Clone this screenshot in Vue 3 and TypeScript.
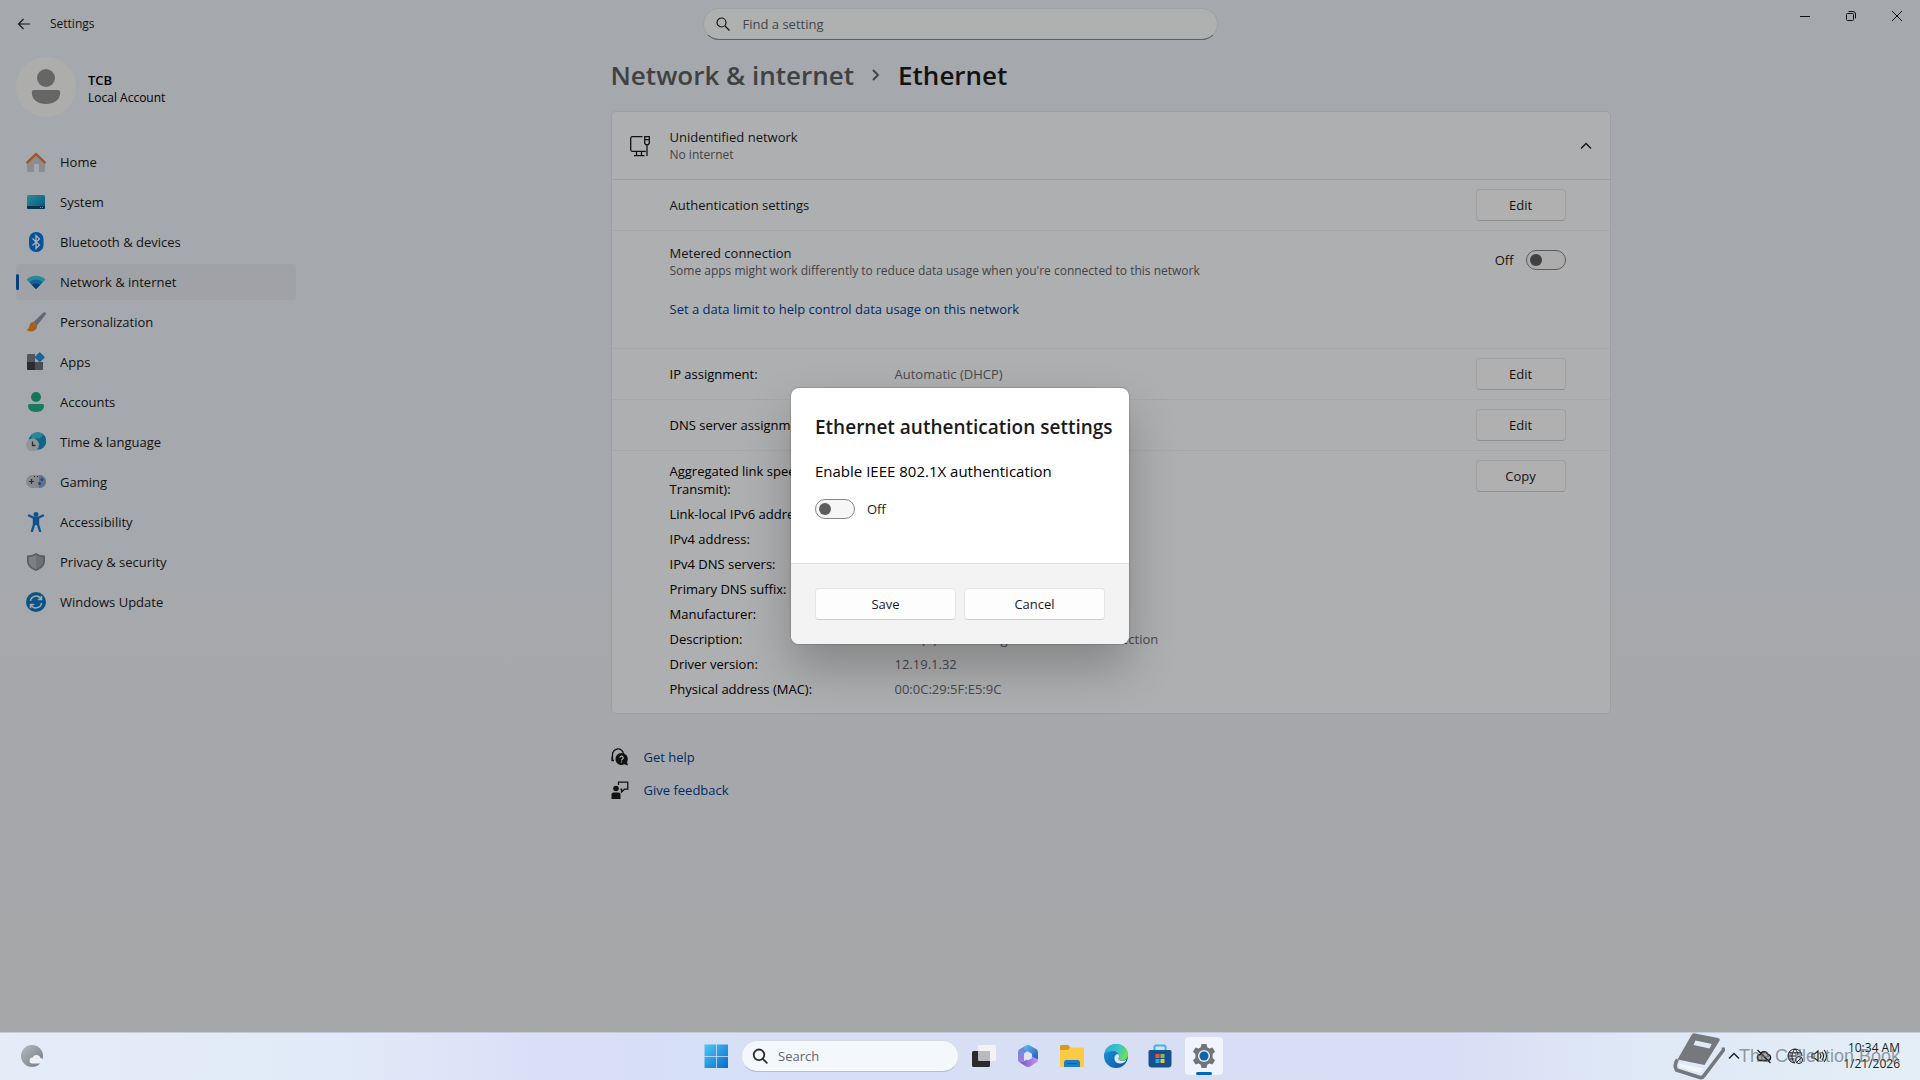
<script setup lang="ts">
import { ref } from 'vue'

interface NavItem {
  id: string
  label: string
}

interface Detail {
  label: string
  value: string
}

const navItems: NavItem[] = [
  { id: 'home', label: 'Home' },
  { id: 'system', label: 'System' },
  { id: 'bluetooth', label: 'Bluetooth & devices' },
  { id: 'network', label: 'Network & internet' },
  { id: 'personalization', label: 'Personalization' },
  { id: 'apps', label: 'Apps' },
  { id: 'accounts', label: 'Accounts' },
  { id: 'time', label: 'Time & language' },
  { id: 'gaming', label: 'Gaming' },
  { id: 'accessibility', label: 'Accessibility' },
  { id: 'privacy', label: 'Privacy & security' },
  { id: 'update', label: 'Windows Update' },
]

const details: Detail[] = [
  { label: 'Aggregated link speed (Receive/ Transmit):', value: '' },
  { label: 'Link-local IPv6 address:', value: '' },
  { label: 'IPv4 address:', value: '' },
  { label: 'IPv4 DNS servers:', value: '' },
  { label: 'Primary DNS suffix:', value: '' },
  { label: 'Manufacturer:', value: '' },
  { label: 'Description:', value: 'Intel(R) 82574L Gigabit Network Connection' },
  { label: 'Driver version:', value: '12.19.1.32' },
  { label: 'Physical address (MAC):', value: '00:0C:29:5F:E5:9C' },
]

const activeNav = ref('network')
const query = ref('')
const taskQuery = ref('')
const metered = ref(false)
const dot1x = ref(false)
</script>

<template>
  <div class="desktop">
    <div class="window">
      <header class="titlebar">
        <div class="titlebar-start">
          <button class="back" type="button" aria-label="Back">
            <svg width="14" height="12" viewBox="0 0 14 12" fill="none" stroke="currentColor" stroke-width="1.1">
              <path d="M13 6H1.5M6.5 1 1.5 6l5 5" />
            </svg>
          </button>
          <span class="app-name">Settings</span>
        </div>
        <div class="find">
          <svg width="14" height="14" viewBox="0 0 14 14" fill="none" stroke="currentColor" stroke-width="1.2">
            <circle cx="5.5" cy="5.5" r="4.5" />
            <path d="m9 9 4.5 4.5" />
          </svg>
          <input v-model="query" type="text" placeholder="Find a setting" aria-label="Find a setting" />
        </div>
        <div class="controls">
          <button type="button" aria-label="Minimize">
            <svg width="12" height="12" viewBox="0 0 12 12" fill="none" stroke="currentColor"><path d="M1 6.5h10" /></svg>
          </button>
          <button type="button" aria-label="Restore">
            <svg width="12" height="12" viewBox="0 0 12 12" fill="none" stroke="currentColor">
              <rect x="1.5" y="3.5" width="7" height="7" rx="1" />
              <path d="M3.5 1.5H8A2.5 2.5 0 0 1 10.5 4v4.5" />
            </svg>
          </button>
          <button type="button" aria-label="Close">
            <svg width="12" height="12" viewBox="0 0 12 12" fill="none" stroke="currentColor"><path d="m1 1 10 10M11 1 1 11" /></svg>
          </button>
        </div>
      </header>

      <div class="body">
        <aside class="sidebar">
          <div class="account">
            <svg class="avatar" viewBox="0 0 60 60">
              <circle cx="30" cy="30" r="30" fill="#f8f8f6" />
              <circle cx="30" cy="21" r="9" fill="#939393" />
              <path d="M18 33h24q2.2 0 2.2 2.2C44.2 43 38 47 30 47s-14.2-4-14.2-11.8Q15.8 33 18 33z" fill="#939393" />
            </svg>
            <div class="account-text">
              <strong>TCB</strong>
              <span>Local Account</span>
            </div>
          </div>

          <nav class="nav">
            <a
              v-for="item in navItems"
              :key="item.id"
              href="#"
              :class="{ active: item.id === activeNav }"
              @click.prevent="activeNav = item.id"
            >
              <svg class="nav-icon" viewBox="0 0 20 20">
                <template v-if="item.id === 'home'">
                  <path d="M1 9 10 2l9 7v10a1 1 0 0 1-1 1h-5v-8H8v8H2a1 1 0 0 1-1-1z" fill="#c9cbce" />
                  <path d="M1.2 10.5 10 2l8.800 8.500" fill="none" stroke="#e8782a" stroke-width="2.400" stroke-linecap="round" stroke-linejoin="round" />
                </template>
                <template v-else-if="item.id === 'system'">
                  <defs>
                    <linearGradient id="sys" x1="0" y1="0" x2="1" y2="1"><stop offset="0" stop-color="#38cdd6" /><stop offset="1" stop-color="#0b77b5" /></linearGradient>
                  </defs>
                  <rect x="1" y="3" width="18" height="14" rx="1.5" fill="url(#sys)" />
                  <path d="M1 14h18v1.5a1.5 1.5 0 0 1-1.5 1.5h-15A1.5 1.5 0 0 1 1 15.5z" fill="#0c4a6e" />
                  <path d="M14 15h1v1h-1zM16 15h1v1h-1z" fill="#8fe0f5" />
                </template>
                <template v-else-if="item.id === 'bluetooth'">
                  <rect x="3" y="0" width="14.5" height="20" rx="7" fill="#0a78e0" />
                  <path d="m6.5 6.5 7 6.5-3.5 3.5v-13L13.5 7l-7 6.5" fill="none" stroke="#fff" stroke-width="1.3" />
                </template>
                <template v-else-if="item.id === 'network'">
                  <path d="M.5 7.5a14 14 0 0 1 19 0L10 17z" fill="#33c7e2" />
                  <path d="M3.3 10.2a10 10 0 0 1 13.4 0L10 17z" fill="#1590d6" />
                  <path d="M6 13a6 6 0 0 1 8 0l-4 4z" fill="#0b52a8" />
                </template>
                <template v-else-if="item.id === 'personalization'">
                  <path d="M19.5.5c.7.7.4 1.6-.2 2.5L11 13.5 7.5 10 17 1c.9-.8 1.8-1.1 2.5-.5z" fill="#8d959e" />
                  <path d="m7.5 10 3.500 3.500c.4 3-2 5.800-5.500 5.900-2 .1-4-.4-5-1.400C2.500 17.500 3 15.500 3.600 13c.6-2 2-3 3.900-3z" fill="#ee8a28" />
                </template>
                <template v-else-if="item.id === 'apps'">
                  <path d="M1 3a1 1 0 0 1 1-1h7v8H1z" fill="#777b82" />
                  <path d="M1 10h8v8H2a1 1 0 0 1-1-1z" fill="#3d4046" />
                  <path d="M9 10h8v7a1 1 0 0 1-1 1H9z" fill="#696d74" />
                  <rect x="10" y="1.5" width="7.5" height="7.5" rx="1" transform="rotate(45 13.75 5.25)" fill="#1f93db" />
                </template>
                <template v-else-if="item.id === 'accounts'">
                  <circle cx="10" cy="5" r="5" fill="#22a97f" />
                  <path d="M3.5 12h13q1.5 0 1.5 1.5C18 18 14.5 20 10 20s-8-2-8-6.500Q2 12 3.500 12z" fill="#23b086" />
                </template>
                <template v-else-if="item.id === 'time'">
                  <circle cx="11.5" cy="9" r="8.8" fill="#1590c8" />
                  <path d="M5 3.500C8-.5 14-.5 17 2l-2 4-5 .5L7 8z" fill="#3cc4cf" />
                  <circle cx="6.5" cy="13" r="6.5" fill="#d4d6d8" />
                  <path d="M6.5 9.5v4h3" fill="none" stroke="#3b3b3b" stroke-width="1.3" />
                </template>
                <template v-else-if="item.id === 'gaming'">
                  <rect x="0" y="3" width="20" height="13" rx="6.5" fill="#c0c4cb" />
                  <path d="M13 3h.5a6.500 6.500 0 0 1 0 13H13z" fill="#8fa3be" />
                  <path d="M5.500 7v5M3 9.500h5M8 4.500h1M11 4.500h1" stroke="#3f454d" stroke-width="1.2" />
                  <circle cx="16" cy="7.5" r="1.5" fill="#2c6cb5" />
                  <circle cx="13.5" cy="11.5" r="1.5" fill="#2c6cb5" />
                </template>
                <template v-else-if="item.id === 'accessibility'">
                  <circle cx="10" cy="2.500" r="2.500" fill="#1478cc" />
                  <path d="M3 3.500 8 6h4l5-2.500M10 6v6M8 6.500v6L6 19M12 6.500v6l2 6.500" fill="none" stroke="#1478cc" stroke-width="2.400" stroke-linecap="round" stroke-linejoin="round" />
                </template>
                <template v-else-if="item.id === 'privacy'">
                  <path d="M10 1c2.500 1.700 5.500 2.500 9 2.500V9c0 5-4 8-9 10-5-2-9-5-9-10V3.500C4.500 3.500 7.500 2.700 10 1z" fill="#83878c" />
                  <path d="M10 3c2 1.300 4.500 2 7.300 2.100V9c0 4-3.300 6.500-7.300 8.200z" fill="#9da1a6" />
                  <path d="M10 3C8 4.300 5.500 5 2.700 5.100V9c0 4 3.300 6.500 7.300 8.200z" fill="#b4b7bb" />
                </template>
                <template v-else>
                  <circle cx="10" cy="10" r="10" fill="#0e78bf" />
                  <path d="M4.500 9A5.600 5.600 0 0 1 15 7M15.500 11A5.600 5.600 0 0 1 5 13M15.500 3.800v3.700h-3.700M4.500 16.200v-3.700h3.700" fill="none" stroke="#e8f3fb" stroke-width="1.5" />
                </template>
              </svg>
              <span>{{ item.label }}</span>
            </a>
          </nav>
        </aside>

        <main class="content">
          <h1 class="crumbs">
            <a href="#" class="crumb-link">Network &amp; internet</a>
            <svg width="10" height="14" viewBox="0 0 10 14" fill="none" stroke="#5b5e63" stroke-width="1.8"><path d="m2 2 5 5-5 5" /></svg>
            <span>Ethernet</span>
          </h1>

          <section class="card">
            <div class="card-head">
              <svg class="eth-icon" width="22" height="22" viewBox="0 0 22 22" fill="none" stroke="#1b1b1b" stroke-width="1.3">
                <path d="M13.500 1.700H3.200A1.500 1.500 0 0 0 1.700 3.200v11.600a1.500 1.500 0 0 0 1.500 1.500h13.600M7.500 16.500v4M12.500 16.500v4M5 20.600h10.500" />
                <path d="M15.700 1.700h4.600v6.500l-1 1.500h-2.600l-1-1.500zM15.700 4.700h4.600M18 9.700V21" />
              </svg>
              <div class="stack">
                <span>Unidentified network</span>
                <small>No internet</small>
              </div>
              <button class="collapse" type="button" aria-label="Collapse">
                <svg width="12" height="8" viewBox="0 0 12 8" fill="none" stroke="currentColor" stroke-width="1.3"><path d="m1 6.500 5-5 5 5" /></svg>
              </button>
            </div>

            <div class="row">
              <span class="grow">Authentication settings</span>
              <button class="btn" type="button">Edit</button>
            </div>

            <div class="row metered">
              <div class="stack grow">
                <label for="metered">Metered connection</label>
                <small>Some apps might work differently to reduce data usage when you're connected to this network</small>
                <a class="link limit" href="#">Set a data limit to help control data usage on this network</a>
              </div>
              <div class="switch">
                <span>{{ metered ? 'On' : 'Off' }}</span>
                <input id="metered" v-model="metered" class="toggle" type="checkbox" />
              </div>
            </div>

            <div class="row">
              <span class="term">IP assignment:</span>
              <span class="value grow">Automatic (DHCP)</span>
              <button class="btn" type="button">Edit</button>
            </div>

            <div class="row">
              <span class="term grow">DNS server assignment:</span>
              <button class="btn" type="button">Edit</button>
            </div>

            <div class="row details">
              <dl class="grow">
                <div v-for="d in details" :key="d.label" class="pair">
                  <dt class="term">{{ d.label }}</dt>
                  <dd class="value">{{ d.value }}</dd>
                </div>
              </dl>
              <button class="btn" type="button">Copy</button>
            </div>
          </section>

          <div class="support">
            <a class="link" href="#">
              <svg width="18" height="18" viewBox="0 0 18 18">
                <path d="M1.500 12V7a5.500 5.500 0 0 1 11-1M1 8.500v4h2" fill="none" stroke="#1b1b1b" stroke-width="1.3" />
                <path d="M10.500 5a6 6 0 1 0 2.800 11.300l3.700 1.200-1-3.600A6 6 0 0 0 10.500 5z" fill="#1b1b1b" />
                <path d="M9 9.700a1.600 1.600 0 1 1 2.300 1.500q-.8.4-.8 1.200M10.500 13.400v1.200" fill="none" stroke="#fff" stroke-width="1.2" />
              </svg>
              Get help
            </a>
            <a class="link" href="#">
              <svg width="18" height="18" viewBox="0 0 18 18">
                <circle cx="5" cy="7.5" r="2.800" fill="#1b1b1b" />
                <path d="M.5 18v-4.500Q.5 11.500 2.500 11.500h5q2 0 2 2V18z" fill="#1b1b1b" />
                <path d="M7.500 4V1.200h9.300v7h-3.300L10.500 11V8.200H9.500" fill="none" stroke="#1b1b1b" stroke-width="1.3" />
              </svg>
              Give feedback
            </a>
          </div>
        </main>
      </div>

      <div class="overlay">
        <div class="dialog" role="dialog" aria-modal="true" aria-labelledby="dlg-title">
          <div class="dialog-body">
            <h2 id="dlg-title">Ethernet authentication settings</h2>
            <label for="dot1x">Enable IEEE 802.1X authentication</label>
            <div class="switch">
              <input id="dot1x" v-model="dot1x" class="toggle" type="checkbox" />
              <span>{{ dot1x ? 'On' : 'Off' }}</span>
            </div>
          </div>
          <div class="dialog-foot">
            <button class="btn" type="button">Save</button>
            <button class="btn" type="button">Cancel</button>
          </div>
        </div>
      </div>
    </div>

    <footer class="taskbar">
      <div class="widgets">
        <button class="plain" type="button" aria-label="Widgets">
          <svg width="24" height="24" viewBox="0 0 24 24">
            <defs>
              <linearGradient id="moon" x1="0" y1="0" x2="1" y2="1"><stop offset="0" stop-color="#b3bac2" /><stop offset="1" stop-color="#737a82" /></linearGradient>
            </defs>
            <circle cx="12" cy="12" r="11" fill="url(#moon)" />
            <path d="M12.500 19.500a3 3 0 0 1 .2-6 4.200 4.200 0 0 1 7.800.5 2.800 2.800 0 0 1 .5 5.500z" fill="#eef1f4" />
          </svg>
        </button>
      </div>

      <div class="dock">
        <button class="task" type="button" aria-label="Start">
          <svg width="24" height="24" viewBox="0 0 24 24">
            <defs>
              <linearGradient id="win" gradientUnits="userSpaceOnUse" x1="0" y1="0" x2="24" y2="24"><stop offset="0" stop-color="#4fcbf8" /><stop offset="1" stop-color="#0669c8" /></linearGradient>
            </defs>
            <path d="M.5.5H12V12H.5zM12.800.5H24V12H12.800zM.5 12.800H12V24H.5zM12.800 12.800H24V24H12.800z" fill="url(#win)" />
          </svg>
        </button>
        <div class="task-search">
          <svg width="16" height="16" viewBox="0 0 16 16" fill="none" stroke="#2b2b2b" stroke-width="1.8">
            <circle cx="7" cy="6.8" r="5.3" />
            <path d="m10.800 10.800 4 4" stroke-linecap="round" />
          </svg>
          <input v-model="taskQuery" type="text" placeholder="Search" aria-label="Search" />
        </div>
        <button class="task" type="button" aria-label="Task view">
          <svg width="24" height="24" viewBox="0 0 24 24">
            <rect x="6" y="1" width="18" height="16" rx="1.5" fill="#f3f3f4" />
            <rect x="0" y="7" width="18" height="16" rx="1.5" fill="#2b2b2c" />
            <path d="M6 7h12v10H7.500A1.500 1.500 0 0 1 6 15.500z" fill="#b9babd" />
          </svg>
        </button>
        <button class="task" type="button" aria-label="Microsoft 365">
          <svg width="24" height="24" viewBox="0 0 24 24">
            <defs>
              <linearGradient id="m1" x1="0" y1="0" x2="0" y2="1"><stop offset="0" stop-color="#5a8fd8" /><stop offset="1" stop-color="#a67be0" /></linearGradient>
              <linearGradient id="m2" x1="0" y1="0" x2="1" y2="1"><stop offset="0" stop-color="#5fc0ee" /><stop offset="1" stop-color="#2f55b5" /></linearGradient>
              <linearGradient id="m3" x1="0" y1="0" x2="1" y2="0"><stop offset="0" stop-color="#6a4fc0" /><stop offset="1" stop-color="#c39af0" /></linearGradient>
            </defs>
            <path d="M10.500 1.200 3.500 5.300Q2 6.200 2 8v8q0 1.200 1 2 2.500 1 5-.8V9.500L13 6z" fill="url(#m1)" />
            <path d="M10.500 1.200q1.500-.8 3 0l7 4.100Q22 6.200 22 8v7q-1.500 1-3.500 0L16 13.500V9.800L8 5.200q0-2.600 2.500-4z" fill="url(#m2)" />
            <path d="M3 18q2.500 1 5-.8l8-4.700 4.500 2.300q1.500.2 1.500 0v1.200q0 1.500-1.500 2.500l-7 4.200q-1.500.8-3 0z" fill="url(#m3)" />
            <path d="m12 8.300 3.800 2.100v3.800L12 16.300l-3.800-2.100v-3.800z" fill="#dfe5f8" />
          </svg>
        </button>
        <button class="task" type="button" aria-label="File Explorer">
          <svg width="26" height="24" viewBox="0 0 26 24">
            <path d="M1 2.500A1.500 1.500 0 0 1 2.500 1H9l2 2v4H1z" fill="#d9981e" />
            <path d="M1 6h8l2-2.500h12.500A1.500 1.500 0 0 1 25 5v16.500a1.500 1.500 0 0 1-1.500 1.500h-21A1.500 1.500 0 0 1 1 21.500z" fill="#fbcb45" />
            <path d="M5 23v-4.500A2.500 2.500 0 0 1 7.500 16h11a2.500 2.500 0 0 1 2.500 2.500V23z" fill="#1b7fcf" />
            <path d="M8 19.500h10" stroke="#0c5fa8" stroke-width="1.2" />
          </svg>
        </button>
        <button class="task" type="button" aria-label="Edge">
          <svg width="24" height="24" viewBox="0 0 24 24">
            <defs>
              <linearGradient id="e1" x1="0" y1="0" x2="1" y2=".4"><stop offset="0" stop-color="#2ba6e0" /><stop offset=".6" stop-color="#35c6c4" /><stop offset="1" stop-color="#6fdc5c" /></linearGradient>
              <linearGradient id="e2" x1="0" y1="0" x2="1" y2="1"><stop offset="0" stop-color="#1a9ae0" /><stop offset="1" stop-color="#0f4fa3" /></linearGradient>
            </defs>
            <circle cx="12" cy="12" r="12" fill="url(#e2)" />
            <path d="M.3 10C1.500 4 6.500 0 12.300 0 19 0 24 5 24 10.500c0 4-3 6-6 6-2.500 0-4-1-3.600-2 .8-1 1.100-2 .6-3.500C14 8.500 11.500 7 8.500 7 5 7 1.700 8 .3 10z" fill="url(#e1)" />
            <path d="M14.400 14.500c-.4 1 1.100 2.300 3.600 2.300 2 0 3.500-.6 4.500-1.300-1 2.500-3.500 4-6.500 4-4 0-6-3-5.500-6 .2-1.500 1.500-3.500 3.500-3.500 1.700 1.500 1.200 3.500.4 4.500z" fill="#dbe6f8" />
          </svg>
        </button>
        <button class="task" type="button" aria-label="Store">
          <svg width="24" height="24" viewBox="0 0 24 24">
            <path d="M6.500 7V3A1.500 1.500 0 0 1 8 1.500h8A1.500 1.500 0 0 1 17.500 3v4" fill="none" stroke="#38b4ea" stroke-width="2" />
            <path d="M.5 7.500A1.500 1.500 0 0 1 2 6h20a1.500 1.500 0 0 1 1.500 1.500V20a3.500 3.500 0 0 1-3.500 3.500H4A3.500 3.500 0 0 1 .5 20z" fill="#184f8e" />
            <path d="M7.500 10h4v4h-4z" fill="#f0582b" />
            <path d="M12.500 10h4v4h-4z" fill="#85c440" />
            <path d="M7.500 15h4v4h-4z" fill="#2aa9ea" />
            <path d="M12.500 15h4v4h-4z" fill="#fbc02f" />
          </svg>
        </button>
        <button class="task running" type="button" aria-label="Settings">
          <svg width="24" height="24" viewBox="0 0 24 24">
            <path
              d="M9.500 0h5l.8 3.300 2 1.100 3.200-1 2.500 4.300-2.400 2.300v3.900l2.400 2.400-2.500 4.300-3.200-1-2 1.100-.8 3.300h-5l-.8-3.300-2-1.100-3.200 1L1 16.300l2.400-2.400V10L1 7.700l2.500-4.300 3.200 1 2-1.100z"
              fill="#70757b"
            />
            <circle cx="12" cy="12" r="6" fill="#e6eaf0" />
            <circle cx="12" cy="12" r="4.5" fill="#0f63ac" />
          </svg>
        </button>
      </div>

      <div class="tray">
        <button class="plain" type="button" aria-label="Show hidden icons">
          <svg width="12" height="12" viewBox="0 0 12 12" fill="none" stroke="#1b1b1b" stroke-width="1.3"><path d="m1 8.500 5-5 5 5" /></svg>
        </button>
        <svg class="cloud" width="16" height="16" viewBox="0 0 16 16" fill="none" stroke="#1b1b1b" stroke-width="1.3">
          <path d="M4.500 12.500a3 3 0 0 1-.3-6 4 4 0 0 1 7.600 0 3 3 0 0 1-.3 6z" fill="#a9adb2" />
          <path d="m1.500 2 13 13" />
        </svg>
        <svg width="16" height="16" viewBox="0 0 16 16" fill="none" stroke="#1b1b1b">
          <path d="M8 15A7 7 0 1 1 15 8M1 8h8M1.800 4.800h12.400M2 11h5.500M8 1C4 5 4 11 7.500 15M8 1c2 2 3 4 3 6.500" />
          <circle cx="12" cy="12" r="3.5" />
          <path d="m9.500 14.500 5-5" />
        </svg>
        <svg width="17" height="16" viewBox="0 0 17 16" fill="none" stroke="#1b1b1b" stroke-width="1.1">
          <path d="M1 6v4h2.500l3.500 3V3L3.500 6zM9 5.500q1.800 2.500 0 5M11 3.800q3.200 4.200 0 8.400M13.200 2q4.600 6 0 12" />
        </svg>
        <div class="clock">
          <time>10:34 AM</time>
          <time>1/21/2026</time>
        </div>
        <div class="brand">
          <svg width="52" height="48" viewBox="0 0 52 48">
            <path
              fill-rule="evenodd"
              d="M21 1.200 45 6q2.500.6 1.500 2.800L31.500 33 4.500 27.500 18.500 3q1-2.200 2.500-1.800zM22.500 8.500 20.500 13 36.500 16.500 38.800 12z"
              fill="#75797d"
            />
            <path d="M4.500 27.500q-4 5.500-1 10.500L27 45.500q2.500.5 4-1.800L50.500 18v-2.500" fill="none" stroke="#75797d" stroke-width="3.600" stroke-linejoin="round" />
            <path d="M6.500 31.500 30 36.500 27.500 41 6.500 35z" fill="#f2f6fa" />
          </svg>
          <span>The Collection Book</span>
        </div>
      </div>
    </footer>
  </div>
</template>

<style>
body {
  margin: 0;
}
</style>

<style scoped>
* {
  box-sizing: border-box;
}

.desktop {
  display: flex;
  flex-direction: column;
  min-height: 100vh;
  font-family: 'Open Sans', 'Noto Sans', sans-serif;
  font-size: 13px;
  line-height: 18px;
  color: #1b1b1b;
}

button,
input {
  font: inherit;
  color: inherit;
}

a {
  color: inherit;
  text-decoration: none;
}

.window {
  position: relative;
  flex: 1;
  display: flex;
  flex-direction: column;
  background: linear-gradient(180deg, #ecf1f7 0%, #eef1f6 60%, #eeeff3 100%);
}

.titlebar {
  display: grid;
  grid-template-columns: 1fr 515px 1fr;
  height: 48px;
}

.titlebar-start {
  display: flex;
  align-items: center;
  padding-left: 8px;
}

.back {
  display: flex;
  align-items: center;
  justify-content: center;
  width: 32px;
  height: 32px;
  padding: 0;
  border: 0;
  background: none;
}

.app-name {
  margin-left: 10px;
  font-size: 12px;
}

.find {
  display: flex;
  align-items: center;
  gap: 13px;
  height: 32px;
  margin-top: 8px;
  padding: 0 12px;
  border: 1px solid #e3e5e8;
  border-bottom-color: #85888c;
  border-radius: 16px;
  background: #fbfcfc;
}

.find input,
.task-search input {
  flex: 1;
  min-width: 0;
  padding: 0;
  border: 0;
  outline: 0;
  background: none;
}

.find input::placeholder,
.task-search input::placeholder {
  color: #62656a;
  opacity: 1;
}

.controls {
  display: flex;
  justify-content: flex-end;
}

.controls button {
  display: flex;
  align-items: center;
  justify-content: center;
  width: 46px;
  height: 32px;
  padding: 0;
  border: 0;
  background: none;
}

.body {
  flex: 1;
  display: flex;
  padding-right: 11px;
}

.sidebar {
  width: 312px;
  padding: 9px 16px 0;
}

.account {
  display: flex;
  align-items: center;
  gap: 12px;
  margin-bottom: 27px;
}

.avatar {
  width: 60px;
  height: 60px;
}

.account-text {
  display: flex;
  flex-direction: column;
  padding-top: 3px;
  font-size: 12px;
  color: #000;
}

.account-text strong {
  font-size: 13px;
  font-weight: 600;
}

.nav {
  display: flex;
  flex-direction: column;
  gap: 4px;
}

.nav a {
  display: flex;
  align-items: center;
  gap: 14px;
  height: 36px;
  padding-left: 10px;
  border-radius: 4px;
}

.nav a.active {
  position: relative;
  background: #e6e9ef;
}

.nav a.active::before {
  content: '';
  position: absolute;
  left: 0;
  width: 3px;
  height: 16px;
  border-radius: 2px;
  background: #005fb8;
}

.nav-icon {
  width: 20px;
  height: 20px;
}

.content {
  flex: 1;
  min-width: 0;
  max-width: 1000px;
  margin: 0 auto;
  padding-top: 9px;
}

.crumbs {
  display: flex;
  align-items: center;
  gap: 17px;
  margin: 0 0 18px;
  font-size: 26px;
  font-weight: 600;
  line-height: 36px;
}

.crumb-link {
  color: #5b5e63;
}

.card {
  border: 1px solid #e0e2e6;
  border-radius: 5px;
  background: #fafbfd;
}

.card-head {
  display: flex;
  align-items: center;
  height: 68px;
  padding: 0 12px 0 17px;
  border-bottom: 1px solid #e0e2e6;
}

.eth-icon {
  margin-right: 19px;
}

.stack {
  display: flex;
  flex-direction: column;
}

.stack small {
  font-size: 12px;
  color: #606266;
}

.collapse {
  display: flex;
  align-items: center;
  justify-content: center;
  width: 24px;
  height: 24px;
  margin-left: auto;
  padding: 0;
  border: 0;
  background: none;
}

.row {
  display: flex;
  align-items: center;
  min-height: 51px;
  padding: 0 44px 0 58px;
  border-bottom: 1px solid #eeeff2;
}

.row:last-child {
  border-bottom: 0;
}

.grow {
  flex: 1;
}

.metered {
  align-items: flex-start;
  height: 118px;
  padding-top: 13px;
}

.metered .switch {
  padding-top: 6px;
}

.limit {
  margin-top: 20px;
}

.link {
  color: #003e92;
}

.term {
  width: 225px;
  color: #000;
}

.value {
  color: #67696d;
}

.details {
  align-items: flex-start;
  padding-top: 9px;
  padding-bottom: 15px;
}

.details dl {
  display: flex;
  flex-direction: column;
  gap: 7px;
  margin: 2px 0 0;
}

.pair {
  display: flex;
}

.pair .term {
  padding-right: 8px;
}

.pair .value {
  margin: 0;
}

.btn {
  width: 90px;
  height: 32px;
  padding: 0;
  border: 1px solid #e4e5e7;
  border-bottom-color: #cccdd0;
  border-radius: 4px;
  background: #fdfdfd;
}

.switch {
  display: flex;
  align-items: center;
  gap: 12px;
}

.toggle {
  appearance: none;
  display: flex;
  align-items: center;
  width: 40px;
  height: 20px;
  margin: 0;
  padding: 0 3px;
  border: 1px solid #868686;
  border-radius: 10px;
  background: #f6f6f6;
}

.toggle::before {
  content: '';
  width: 12px;
  height: 12px;
  border-radius: 50%;
  background: #5d5d5d;
}

.toggle:checked {
  justify-content: flex-end;
  border-color: #005fb8;
  background: #005fb8;
}

.toggle:checked::before {
  background: #fff;
}

.support {
  display: flex;
  flex-direction: column;
  align-items: flex-start;
  gap: 13px;
  margin-top: 33px;
}

.support .link {
  display: flex;
  align-items: center;
  gap: 15px;
  line-height: 20px;
}

.overlay {
  position: absolute;
  inset: 0;
  display: flex;
  align-items: center;
  justify-content: center;
  background: rgba(0, 0, 0, 0.3);
}

.dialog {
  width: 338px;
  border-radius: 8px;
  overflow: hidden;
  background: #fff;
  box-shadow: 0 0 2px rgba(0, 0, 0, 0.4), 0 24px 48px rgba(0, 0, 0, 0.24);
}

.dialog-body {
  display: flex;
  flex-direction: column;
  height: 176px;
  padding: 25px 24px 0;
  border-bottom: 1px solid #e0e0e0;
}

.dialog-body h2 {
  margin: 0 0 18px;
  font-size: 19px;
  font-weight: 600;
  line-height: 28px;
  white-space: nowrap;
}

.dialog-body label {
  margin-bottom: 16px;
  font-size: 15px;
  line-height: 24px;
  color: #000;
}

.dialog-foot {
  display: flex;
  gap: 8px;
  padding: 24px;
  background: #f3f3f3;
}

.dialog-foot .btn {
  flex: 1;
}

.taskbar {
  display: grid;
  grid-template-columns: 1fr auto 1fr;
  align-items: center;
  height: 48px;
  background: linear-gradient(90deg, #e3ecf7 0%, #e1eaf8 18%, #dadff7 28%, #d6e0f7 36%, #d8dff5 60%, #d8def5 75%, #dfe9f6 86%, #e3eef7 100%);
  box-shadow: inset 0 1px 0 #c3cbdb;
}

.widgets {
  display: flex;
  padding-left: 20px;
}

.plain {
  display: flex;
  padding: 0;
  border: 0;
  background: none;
}

.dock {
  display: flex;
  align-items: center;
}

.task {
  position: relative;
  display: flex;
  align-items: center;
  justify-content: center;
  width: 38px;
  height: 38px;
  margin: 0 3px;
  padding: 0;
  border: 0;
  border-radius: 4px;
  background: none;
}

.task.running {
  background: #f1f4fc;
}

.task.running::after {
  content: '';
  position: absolute;
  bottom: 0;
  width: 16px;
  height: 3px;
  border-radius: 2px;
  background: #0067c0;
}

.task-search {
  display: flex;
  align-items: center;
  gap: 10px;
  width: 218px;
  height: 32px;
  margin: 0 3px;
  padding: 0 10px;
  border: 1px solid #d5daea;
  border-bottom-color: #b4bccd;
  border-radius: 16px;
  background: #f4f8fd;
}

.tray {
  position: relative;
  display: flex;
  align-items: center;
  justify-content: flex-end;
  gap: 8px;
  height: 48px;
  padding-right: 20px;
}

.cloud {
  margin: 0 7px 0 8px;
}

.clock {
  display: flex;
  flex-direction: column;
  align-items: flex-end;
  width: 64px;
  font-size: 12px;
  line-height: 16px;
}

.brand {
  position: absolute;
  right: 20px;
  display: flex;
  align-items: center;
  gap: 14px;
  font-family: 'Liberation Sans', Arial, sans-serif;
  font-size: 18px;
  line-height: 24px;
  color: rgba(95, 100, 106, 0.65);
  white-space: nowrap;
  pointer-events: none;
}
</style>
